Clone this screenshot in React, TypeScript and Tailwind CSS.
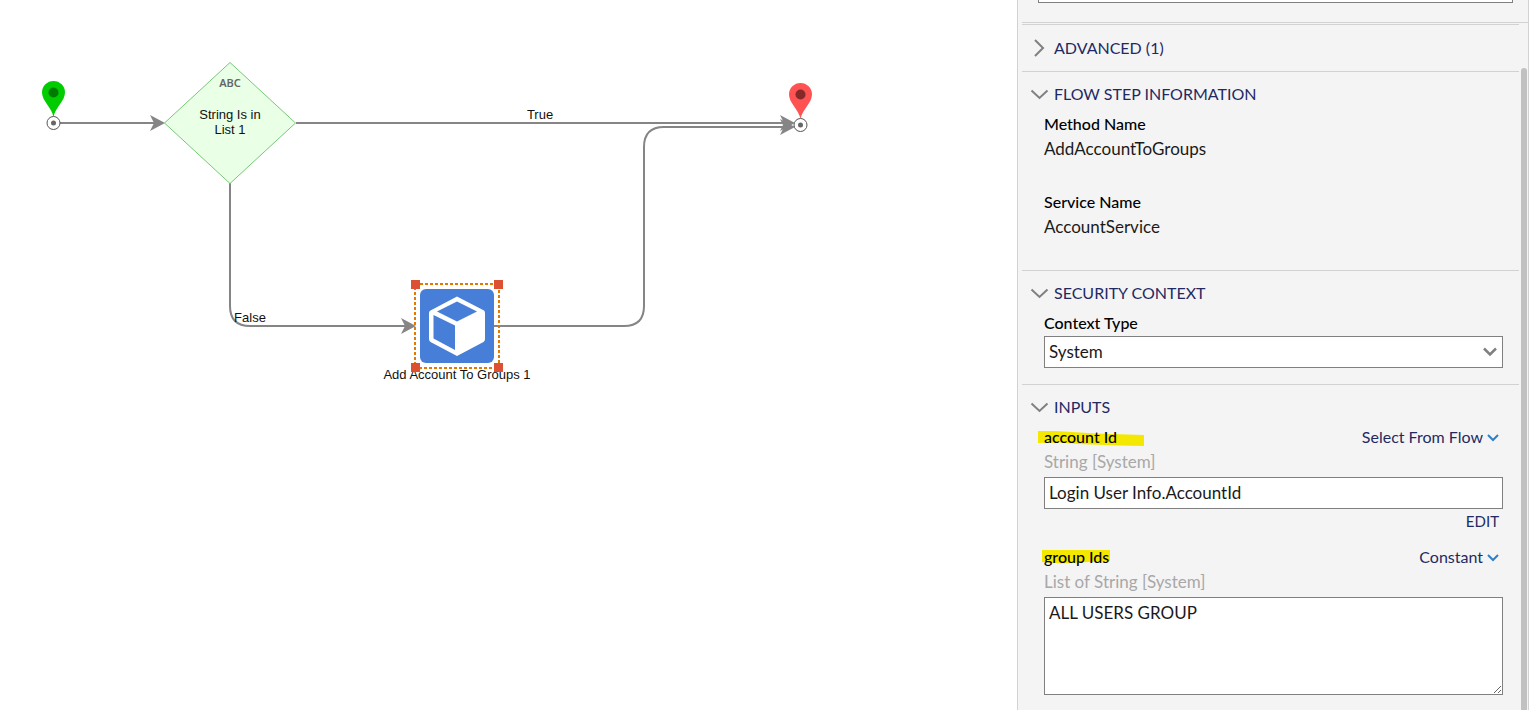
import React, { useState } from 'react';

const FlowCanvas: React.FC = () => (
  <main className="min-w-0 flex-1 overflow-hidden bg-white">
    <svg width="1010" height="700" viewBox="0 0 1010 700" className="block max-w-none">
      {/* Connectors */}
      <g fill="none" stroke="#858585" strokeWidth="2">
        <path d="M60 123H156" />
        <path d="M296 123H788" />
        <path d="M230 183V306Q230 326 250 326H407" />
        <path d="M494 326H624Q644 326 644 306V147Q644 127 664 127H788" />
      </g>
      <g fill="#858585">
        <path d="M150 115L165 123L150 131L154 123Z" />
        <path d="M401 318L416 326L401 334L405 326Z" />
        <path d="M780 115L795 123L780 131L784 123Z" />
        <path d="M780 119L795 127L780 135L784 127Z" />
      </g>

      {/* Start */}
      <path d="M53.500 117C52 108 42 101 42 92.500A11.500 11.500 0 0 1 65 92.500C65 101 55 108 53.500 117Z" fill="#00cc00" />
      <circle cx="53.500" cy="92.500" r="5" fill="#007a00" />
      <circle cx="53.500" cy="123" r="6.500" fill="#fff" stroke="#555" />
      <circle cx="53.500" cy="123" r="2.500" fill="#666" />

      {/* End */}
      <path d="M800.500 119C799 110 789 103 789 94.500A11.500 11.500 0 0 1 812 94.500C812 103 802 110 800.500 119Z" fill="#ff5252" />
      <circle cx="800.500" cy="94.500" r="5" fill="#852828" />
      <circle cx="800.500" cy="125" r="6.500" fill="#fff" stroke="#555" />
      <circle cx="800.500" cy="125" r="2.500" fill="#666" />

      {/* Rule step */}
      <path d="M230 62.500L295.500 123L230 183.500L164.500 123Z" fill="#e9ffe6" stroke="#78c878" />
      <text x="230" y="87" textAnchor="middle" className="fill-[#666] font-['Noto_Sans',sans-serif] text-[11px] font-semibold">ABC</text>

      {/* Selected step */}
      <rect x="420" y="289" width="74" height="74" rx="6" fill="#467ed8" />
      <path d="M457 296.500L484 310.500Q485 311 485 313V339Q485 341 483.500 342L457 356L430.500 342Q429 341 429 339V313Q429 311 430.500 310.500Z" fill="#fff" />
      <path d="M457 301.500L477 311.500L457 321.500L437 311.500Z" fill="#467ed8" />
      <path d="M433.500 315L455 325.500V350L433.500 338.500Z" fill="#467ed8" />
      <rect x="415" y="284" width="84" height="84" fill="none" stroke="#e07b00" strokeWidth="2" strokeDasharray="3 2" />

      <g textAnchor="middle" className="fill-[#111] font-['Liberation_Sans',Arial,sans-serif] text-[13px]">
        <text x="230" y="119">String Is in</text>
        <text x="230" y="134">List 1</text>
        <text x="540" y="119">True</text>
        <text x="250" y="322">False</text>
        <text x="457" y="379">Add Account To Groups 1</text>
      </g>

      <g fill="#dc5034">
        <rect x="411" y="280" width="9" height="9" />
        <rect x="494" y="280" width="9" height="9" />
        <rect x="411" y="363" width="9" height="9" />
        <rect x="494" y="363" width="9" height="9" />
      </g>
    </svg>
  </main>
);

interface SectionProps {
  title: string;
  children: React.ReactNode;
}

const Section: React.FC<SectionProps> = ({ title, children }) => {
  const [isOpen, setIsOpen] = useState(true);

  return (
    <section className="border-t border-[#d2d2d2]">
      <h2 className="text-base">
        <button
          onClick={() => setIsOpen(!isOpen)}
          className="flex h-10 w-full items-center gap-1 pt-1 pl-2 text-left text-[#1f2a63]"
        >
          <svg width="20" height="20" viewBox="0 0 20 20" className="shrink-0" fill="none" stroke="#808080" strokeWidth="2">
            <path d={isOpen ? 'M1.500 6.500L9.500 14L17.500 6.500' : 'M5 2L13 10L5 18'} />
          </svg>
          {title}
        </button>
      </h2>
      {isOpen && <div className="pr-4 pl-[22px]">{children}</div>}
    </section>
  );
};

const LinkChevron: React.FC = () => (
  <svg width="12" height="12" viewBox="0 0 12 12" fill="none" stroke="#2f80c8" strokeWidth="2">
    <path d="M1 4L6 9L11 4" />
  </svg>
);

const App: React.FC = () => {
  const [contextType, setContextType] = useState('System');
  const [accountId, setAccountId] = useState('Login User Info.AccountId');
  const [groupIds, setGroupIds] = useState('ALL USERS GROUP');

  return (
    <div className="flex h-screen overflow-hidden bg-white">
      <FlowCanvas />

      <aside className="mr-px flex w-[512px] shrink-0 overflow-hidden border-x border-[#d2d2d2] bg-[#f4f4f4] pl-1 font-['Lato','Noto_Sans',sans-serif] text-[17px] leading-6 text-[#1a1a1a]">
        <div className="min-w-0 flex-1">
          <div className="mr-[6px] ml-4 h-[3px] border border-t-0 border-[#808080] bg-white" />
          <div className="mt-[19px] -mr-[9px] mb-px border-t border-[#d2d2d2]" />

          {/* Advanced */}
          <section className="border-t border-[#d2d2d2]">
            <h2 className="text-base">
              <button className="flex h-[46px] w-full items-center gap-1 pl-2 text-left text-[#1f2a63]">
                <svg width="20" height="20" viewBox="0 0 20 20" className="shrink-0" fill="none" stroke="#808080" strokeWidth="2">
                  <path d="M5 2L13 10L5 18" />
                </svg>
                ADVANCED (1)
              </button>
            </h2>
          </section>

          <Section title="FLOW STEP INFORMATION">
            <dl className="flex flex-col gap-[29px] pb-[31px]">
              <div>
                <dt className="pb-[2px] text-base leading-[23px] font-medium text-black">Method Name</dt>
                <dd>AddAccountToGroups</dd>
              </div>
              <div>
                <dt className="pb-[2px] text-base leading-[23px] font-medium text-black">Service Name</dt>
                <dd>AccountService</dd>
              </div>
            </dl>
          </Section>

          <Section title="SECURITY CONTEXT">
            <label htmlFor="context-type" className="block pb-[2px] text-base leading-[23px] font-medium text-black">Context Type</label>
            <div className="relative mb-4">
              <select
                id="context-type"
                value={contextType}
                onChange={(e) => setContextType(e.target.value)}
                className="block h-8 w-full appearance-none border border-[#808080] bg-white px-1"
              >
                <option>System</option>
              </select>
              <svg width="16" height="16" viewBox="0 0 16 16" className="pointer-events-none absolute top-2 right-1" fill="none" stroke="#808080" strokeWidth="2.5">
                <path d="M1 4.500L7 10.500L13 4.500" />
              </svg>
            </div>
          </Section>

          <Section title="INPUTS">
            <div className="flex items-center justify-between pr-1 pb-[2px] text-base leading-[23px]">
              <label htmlFor="account-id" className="relative font-medium text-black">
                <svg width="106" height="18" viewBox="0 0 106 18" className="absolute top-1 -left-[6px]" fill="#f5e800">
                  <path d="M0 2H18L58 4.500L106 6V17L80 16.500L40 15L22 13.500L0 14Z" />
                </svg>
                <span className="relative">account Id</span>
              </label>
              <button className="flex items-center gap-1 text-[#1f2a63]">
                Select From Flow
                <LinkChevron />
              </button>
            </div>
            <p className="text-[#a8a8a8]">String [System]</p>
            <input
              id="account-id"
              type="text"
              value={accountId}
              onChange={(e) => setAccountId(e.target.value)}
              className="mt-[3px] block h-8 w-full border border-[#808080] bg-white px-1 pb-[2px]"
            />
            <div className="flex justify-end pr-1">
              <button className="text-[15px] leading-6 text-[#1f2a63]">EDIT</button>
            </div>

            <div className="mt-3 flex items-center justify-between pr-1 pb-[2px] text-base leading-[23px]">
              <label htmlFor="group-ids" className="relative font-medium text-black">
                <svg width="68" height="16" viewBox="0 0 68 16" className="absolute top-1 -left-[2px]" fill="#f5e800">
                  <path d="M0 1H68V12L46 13L20 14.500L0 13Z" />
                </svg>
                <span className="relative">group Ids</span>
              </label>
              <button className="flex items-center gap-1 text-[#1f2a63]">
                Constant
                <LinkChevron />
              </button>
            </div>
            <p className="text-[#a8a8a8]">List of String [System]</p>
            <textarea
              id="group-ids"
              value={groupIds}
              onChange={(e) => setGroupIds(e.target.value)}
              className="mt-[3px] block h-[98px] w-full resize border border-[#808080] bg-white px-1 py-[3px]"
            />
          </Section>
        </div>

        {/* Scrollbar */}
        <div className="flex w-[9px] shrink-0 justify-center pt-[68px]">
          <div className="w-[6px] rounded-t-full bg-[#c1c1c1]" />
        </div>
      </aside>
    </div>
  );
};

export default App;
